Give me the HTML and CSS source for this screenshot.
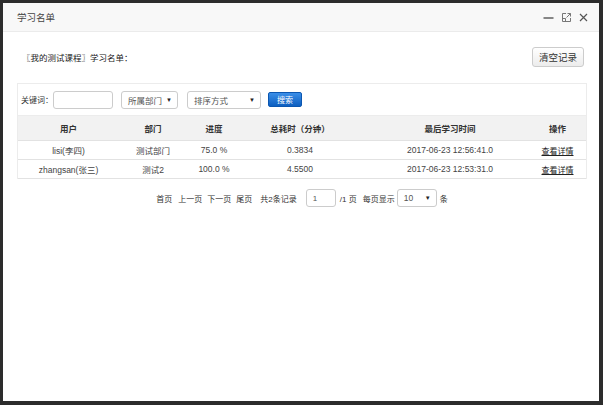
FILE: index.html
```html
<!DOCTYPE html>
<html lang="zh">
<head>
<meta charset="utf-8">
<title>学习名单</title>
<link rel="stylesheet" href="styles.css">
</head>
<body>
<div class="dialog">
  <div class="header">
    <span class="title">学习名单</span>
    <div class="tools">
      <svg class="ico" width="11" height="11" viewBox="0 0 11 11"><path d="M0.5 6h10" stroke="#555" stroke-width="1.4"/></svg>
      <svg class="ico" width="11" height="11" viewBox="0 0 11 11"><path d="M5 1.5H1.5v8h8V6" fill="none" stroke="#777" stroke-width="1"/><path d="M1.5 6.5h3v3" fill="none" stroke="#777" stroke-width="1"/><path d="M5.5 5.5l4-4M6.5 1.5h3v3" fill="none" stroke="#777" stroke-width="1"/></svg>
      <svg class="ico" width="9" height="9" viewBox="0 0 9 9"><path d="M1 1l7 7M8 1l-7 7" stroke="#555" stroke-width="1.2"/></svg>
    </div>
  </div>
  <div class="content">
    <div class="toprow">
      <span class="caption">〖我的测试课程〗学习名单：</span>
      <span class="btn-clear">清空记录</span>
    </div>
    <div class="panel">
      <div class="search">
        <span class="lbl">关键词：</span>
        <span class="input kw"></span>
        <span class="sel dept"><span>所属部门</span><span class="arr">▼</span></span>
        <span class="sel sort"><span>排序方式</span><span class="arr">▼</span></span>
        <span class="btn-search">搜索</span>
      </div>
      <table class="grid">
        <colgroup>
          <col class="c1"><col class="c2"><col class="c3"><col class="c4"><col class="c5"><col class="c6">
        </colgroup>
        <thead>
          <tr><th>用户</th><th>部门</th><th>进度</th><th>总耗时（分钟）</th><th>最后学习时间</th><th class="last">操作</th></tr>
        </thead>
        <tbody>
          <tr><td>lisi(李四)</td><td>测试部门</td><td>75.0 %</td><td>0.3834</td><td>2017-06-23 12:56:41.0</td><td class="last"><a class="link">查看详情</a></td></tr>
          <tr><td>zhangsan(张三)</td><td>测试2</td><td>100.0 %</td><td>4.5500</td><td>2017-06-23 12:53:31.0</td><td class="last"><a class="link">查看详情</a></td></tr>
        </tbody>
      </table>
    </div>
    <div class="pager">
      <span class="p1">首页</span>
      <span class="p2">上一页</span>
      <span class="p3">下一页</span>
      <span class="p4">尾页</span>
      <span class="p5">共2条记录</span>
      <span class="input pg">1</span>
      <span class="p6">/1 页</span>
      <span class="p7">每页显示</span>
      <span class="sel size"><span>10</span><span class="arr">▼</span></span>
      <span class="p8">条</span>
    </div>
  </div>
</div>
</body>
</html>
```

FILE: styles.css
```css
html, body {
  margin: 0;
  padding: 0;
  background: #2c2c2c;
}
body {
  font-family: "Liberation Sans", "Noto Sans CJK SC", sans-serif;
  color: #333;
  font-size: 9px;
}
.dialog {
  margin: 3px 0 0 3px;
  width: 596px;
  height: 398px;
  background: #fff;
  box-shadow: 0 1px 0 #6a6a6a;
}
.header {
  height: 28px;
  background: #f8f8f8;
  border-bottom: 1px solid #ebebeb;
  display: flex;
  align-items: center;
  justify-content: space-between;
  padding: 0 11px 0 14px;
}
.title {
  font-size: 9.5px;
  color: #444;
}
.tools {
  display: flex;
  align-items: center;
  gap: 7px;
}
.ico { display: block; }
.content {
  padding: 15px 12px 0 14px;
}
.toprow {
  display: flex;
  align-items: center;
  justify-content: space-between;
  height: 20px;
}
.caption {
  padding-left: 5px;
  font-size: 8.5px;
  color: #222;
}
.btn-clear {
  width: 52px;
  height: 20px;
  box-sizing: border-box;
  margin-right: 3px;
  border: 1px solid #ccc;
  border-radius: 3px;
  background: linear-gradient(#fff, #ececec);
  display: flex;
  align-items: center;
  justify-content: center;
  font-size: 9.5px;
  color: #333;
}
.panel {
  margin-top: 16px;
  border: 1px solid #ececec;
  border-bottom: 0;
}
.search {
  height: 31px;
  display: flex;
  align-items: center;
  padding-left: 3px;
  font-size: 8px;
}
.input {
  box-sizing: border-box;
  height: 18px;
  border: 1px solid #ccc;
  border-radius: 3px;
  background: #fff;
  display: flex;
  align-items: center;
  padding-left: 6px;
  color: #555;
}
.kw {
  width: 60px;
  margin-left: 0;
}
.sel {
  box-sizing: border-box;
  height: 18px;
  border: 1px solid #ccc;
  border-radius: 3px;
  background: #fff;
  display: flex;
  align-items: center;
  justify-content: space-between;
  padding: 0 5px 0 6px;
  color: #555;
  font-size: 8.5px;
}
.arr {
  font-size: 6px;
  color: #222;
}
.dept { width: 57px; margin-left: 8px; }
.sort { width: 74px; margin-left: 9px; }
.btn-search {
  margin-left: 7px;
  width: 34px;
  height: 15px;
  border-radius: 2px;
  background: linear-gradient(#3a8ee8, #0d5fc0);
  border: 1px solid #0b56b0;
  box-sizing: border-box;
  color: #fff;
  font-size: 8px;
  display: flex;
  align-items: center;
  justify-content: center;
}
.grid {
  width: 100%;
  border-collapse: collapse;
  table-layout: fixed;
}
.c1 { width: 101px; }
.c2 { width: 68px; }
.c3 { width: 54px; }
.c4 { width: 118px; }
.c5 { width: 182px; }
.c6 { width: 45px; }
.grid th {
  height: 24px;
  background: #f2f2f2;
  font-weight: bold;
  font-size: 8.5px;
  color: #333;
  padding: 0;
  border-top: 1px solid #ececec;
  border-bottom: 1px solid #e2e2e2;
}
.grid td {
  height: 18px;
  padding: 0;
  text-align: center;
  font-size: 8.5px;
  color: #444;
  border-bottom: 1px solid #e2e2e2;
}
.grid .last {
  padding-right: 12px;
}
.link {
  color: #222;
  text-decoration: underline;
  font-size: 8px;
}
.pager {
  margin-top: 10px;
  display: flex;
  align-items: center;
  justify-content: center;
  font-size: 8px;
  color: #333;
}
.p2, .p3, .p4 { margin-left: 5px; }
.p2 { margin-left: 6px; }
.p5 { margin-left: 8px; }
.pg { width: 30px; margin-left: 9px; }
.p6 { margin-left: 4px; }
.p7 { margin-left: 6px; }
.size { width: 40px; margin-left: 2px; }
.p8 { margin-left: 3px; }
```
